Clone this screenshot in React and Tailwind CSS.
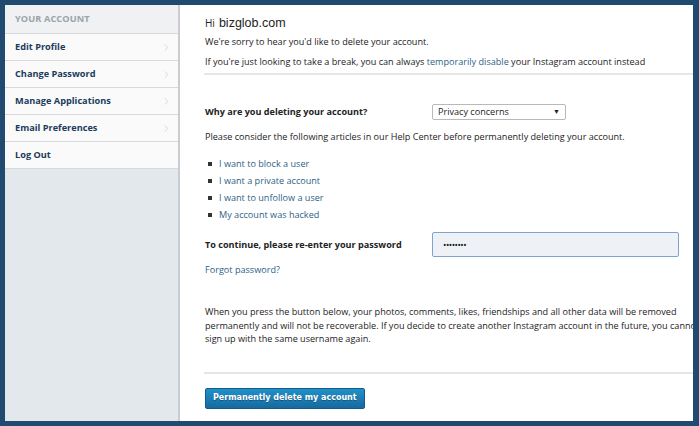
import { ChevronRight } from 'lucide-react';

const menu = ['Edit Profile', 'Change Password', 'Manage Applications', 'Email Preferences', 'Log Out'];

const articles = [
  'I want to block a user',
  'I want a private account',
  'I want to unfollow a user',
  'My account was hacked',
];

export default function App() {
  return (
    <div className="w-[699px] h-[426px] bg-[#204a70] pt-[5px] pl-[5px] pr-[6px] pb-[5px] font-['Open_Sans',sans-serif]">
      <div className="flex h-full bg-white overflow-hidden">
        {/* Sidebar */}
        <div className="w-[175px] shrink-0 bg-[#e3e8ec] border-r-2 border-[#c9ccd1]">
          <div className="h-[29px] flex items-center pl-[10px] bg-[#f0f1f2] border-b border-[#d6d8da] text-[9.2px] font-bold text-[#9ba3ab] tracking-[0.1px]">
            YOUR ACCOUNT
          </div>
          {menu.map((item) => (
            <div
              key={item}
              className="h-[27px] flex items-center justify-between pl-[10px] pr-[6px] bg-[#fafafa] border-b border-[#d6d8da] text-[9.2px] font-bold text-[#1c3b5a]"
            >
              <span>{item}</span>
              {item !== 'Log Out' && <ChevronRight size={11} strokeWidth={1.5} className="text-[#c4c7ca]" />}
            </div>
          ))}
        </div>

        {/* Main content */}
        <div className="flex-1 pl-[25px] text-[9.1px] text-[#222] whitespace-nowrap">
          <div className="pt-[9px] h-[27px] flex items-baseline gap-[4px]">
            <span className="text-[10px]">Hi</span>
            <span className="text-[12.5px] font-['Liberation_Sans',sans-serif]">bizglob.com</span>
          </div>
          <p className="leading-[20px]">We're sorry to hear you'd like to delete your account.</p>
          <p className="leading-[20px]">
            If you're just looking to take a break, you can always{' '}
            <span className="text-[#2e5f86]">temporarily disable</span> your Instagram account instead
          </p>
          <div className="mt-[1px] h-[2px] bg-[#e6e6e6] -ml-[1px]" />

          <div className="mt-[27px] flex items-center h-[20px]">
            <span className="w-[227px] font-bold">Why are you deleting your account?</span>
            <div className="w-[134px] h-[16px] border border-[#b9b9b9] rounded-[2px] flex items-center justify-between px-[5px]">
              <span>Privacy concerns</span>
              <span className="text-[7px]">▼</span>
            </div>
          </div>

          <p className="mt-[7px] leading-[16px]">
            Please consider the following articles in our Help Center before permanently deleting your account.
          </p>

          <ul className="mt-[10px] pl-[3px]">
            {articles.map((a) => (
              <li key={a} className="flex items-center h-[17px]">
                <span className="w-[4px] h-[4px] bg-[#333] mr-[7px]" />
                <span className="text-[#2e5f86]">{a}</span>
              </li>
            ))}
          </ul>

          <div className="mt-[9px] flex items-center">
            <span className="w-[227px] font-bold">To continue, please re-enter your password</span>
            <div className="w-[247px] h-[25px] bg-[#eef1f5] border border-[#7fa3cf] rounded-[2px] flex items-center pl-[10px] text-[9px] tracking-[-0.5px] text-[#111]">
              ••••••••
            </div>
          </div>

          <p className="mt-[5px] text-[#2e5f86] leading-[16px]">Forgot password?</p>

          <p className="mt-[27px] leading-[13.5px]">
            When you press the button below, your photos, comments, likes, friendships and all other data will be removed
            <br />
            permanently and will not be recoverable. If you decide to create another Instagram account in the future, you cannot
            <br />
            sign up with the same username again.
          </p>

          <div className="mt-[26px] h-[2px] bg-[#e6e6e6] -ml-[1px]" />

          <button className="mt-[14px] h-[21px] px-[7px] rounded-[2px] bg-gradient-to-b from-[#2190c8] to-[#166a9f] border border-[#135b8a] text-white text-[8px] font-bold font-['DejaVu_Sans',sans-serif] [text-shadow:0_1px_0_rgba(0,0,0,0.3)]">
            Permanently delete my account
          </button>
        </div>
      </div>
    </div>
  );
}
